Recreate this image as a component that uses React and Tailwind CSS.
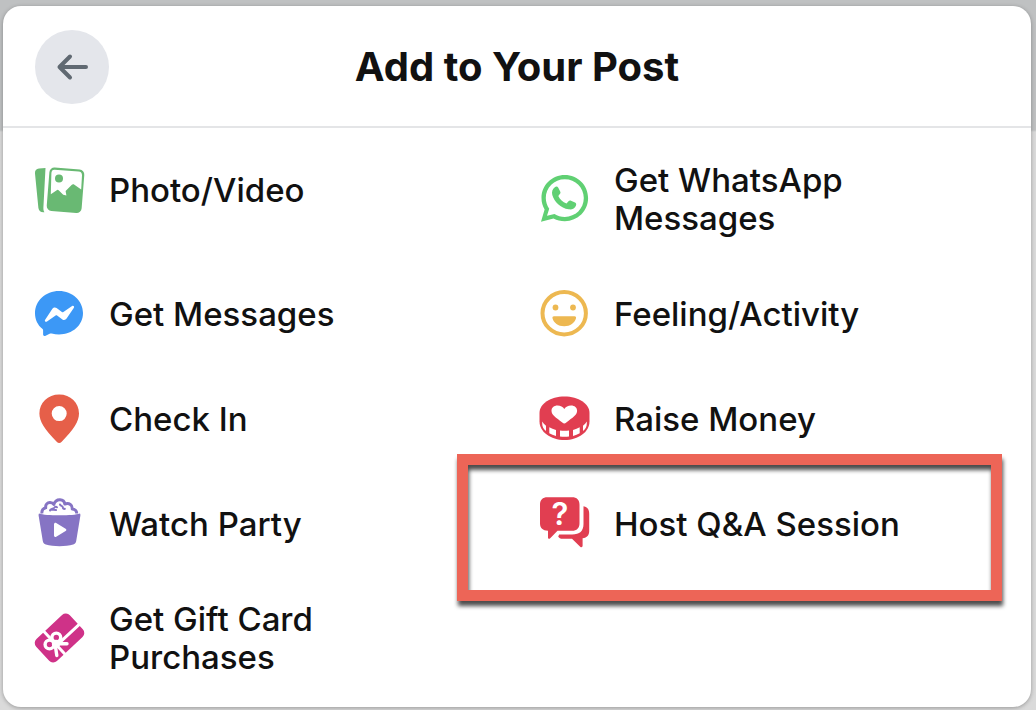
const iconClass = "h-[50px] w-[50px] shrink-0 overflow-visible";

function Svg({ children }) {
  return (
    <svg viewBox="0 0 50 50" className={iconClass} fill="none" aria-hidden="true">
      {children}
    </svg>
  );
}

function PhotoIcon() {
  return (
    <Svg>
      <path d="M4 3.6 10.5 3 8.4 42.5c-.1 2 .2 3.500 1 4.700-3.200.4-5.600-1-6-4.200L0 8.500C-.3 5.800 1.300 3.900 4 3.600Z" fill="#69b973" />
      <rect x="13" y="3.500" width="35" height="43.500" rx="5" transform="rotate(4.500 30.500 25.500)" fill="#69b973" />
      <path d="M19.500 4.700 43.500 6.500c2.300.2 3.600 1.500 3.500 3.800l-.8 14.200-6.800-4.800c-1-.7-2-.6-2.800.2l-6 6 .8 4.500-3.200-.6-4.300-4.400c-.8-.8-1.700-.8-2.500 0l-5.600 3.900L16.400 8c.2-2.200 1.200-3.400 3.100-3.300Z" fill="#fff" />
      <circle cx="24" cy="13.500" r="4" fill="#69b973" />
    </Svg>
  );
}

function MessengerIcon() {
  return (
    <Svg>
      <path d="M24 2C10.500 2 0 11.800 0 24.200c0 6.300 2.700 11.700 7.300 15.600.6.600.8 1 .8 1.800v4c0 1.100 1 1.800 2 1.300l5-2.300c.6-.2 1-.3 1.600-.1 2.300.6 4.800.9 7.300.9 13.500 0 24-9.200 24-21.400S37.500 2 24 2Z" fill="#3c98f6" />
      <path d="m10 31 7.400-11.200c1-1.400 2.800-1.800 4.200-.8l5.300 4c.5.3 1 .3 1.500 0l8.700-5.900c1.200-.8 2.500.4 1.800 1.600l-7.300 10.900c-1 1.500-2.800 1.900-4.200.8l-5.300-3.800c-.5-.4-1-.4-1.500 0L12 32.600c-1.200.8-2.700-.4-2-1.600Z" fill="#fff" />
    </Svg>
  );
}

function PinIcon() {
  return (
    <Svg>
      <path fillRule="evenodd" d="M24.200.5C12.800.5 4.400 8.600 4.400 19.500c0 8 5.300 15.700 17.300 28.300 1.600 1.600 3.400 1.600 5 0C38.700 35.200 44 27.500 44 19.500 44 8.600 35.600.5 24.200.5Zm0 11.600a7.500 7.500 0 1 1 0 15 7.500 7.500 0 0 1 0-15Z" fill="#e65f49" />
    </Svg>
  );
}

function PopcornIcon() {
  return (
    <Svg>
      <path d="M7 14.500c-.6-3 1.200-5.200 3.700-5.700-.5-3.300 1.800-5.400 4.300-5.300 2 .1 3.200 1 3.800 1.900C20 2 22.200.7 25 .8c2.700.1 4.500 2 4.800 4.200 4.600-1.400 7.800 1 7.400 4.900 2.600.2 4.600 2 4.500 4.600" stroke="#8674c4" strokeWidth="3" strokeLinejoin="round" />
      <path d="M15 11.500c.4-2.400 3.400-1.300 4.500-3 .4-.8 1.800-1 2.500-.2M16 10.500l5 .6M25 5.500c.4 1.800 2.800 1 2.800 2.800 0 1.200 1 1.800 2 1.500" stroke="#8674c4" strokeWidth="2" strokeLinecap="round" />
      <path d="M4 14.400c4 1.200 11 1.900 20.500 1.900S41 15.600 45 14.400c.4.600.5 1.200.4 2L41.200 42c-.3 2-1.300 3-3 3.500-7.600 2.200-19.800 2.200-27.400 0-1.700-.5-2.700-1.500-3-3.500L3.600 16.400c-.1-.8 0-1.400.4-2Z" fill="#8674c4" />
      <path d="M19 25.200c0-1.200 1.200-1.900 2.200-1.300l9.400 5.800c1 .6 1 1.800 0 2.400l-9.400 5.700c-1 .6-2.200-.1-2.200-1.300Z" fill="#fff" />
    </Svg>
  );
}

function GiftCardIcon() {
  return (
    <Svg>
      <g transform="rotate(-43 24.500 25)">
        <rect x="1.500" y="10" width="46" height="30" rx="5.500" fill="#cf3288" />
        <path d="M17.500 9v32M17 28.500h32" stroke="#fff" strokeWidth="3" />
      </g>
      <g stroke="#fff" strokeWidth="3.400" strokeLinecap="round">
        <circle cx="21.300" cy="24.500" r="4.400" fill="#cf3288" />
        <circle cx="14.500" cy="31.500" r="4.400" fill="#cf3288" />
        <path d="m20 30.500 12 .3M20 30.500l1.800 12" strokeWidth="3.400" />
      </g>
      <circle cx="21" cy="31" r="4.200" fill="#fff" />
    </Svg>
  );
}

function WhatsAppIcon() {
  return (
    <Svg>
      <path fillRule="evenodd" d="M24.800 1C11.800 1 1.500 11.200 1.500 24c0 4.300 1.100 8.100 3.100 11.500L1 47.700l12.500-3.300c3.400 1.800 7.200 2.800 11.300 2.800 13 0 23.300-10.200 23.300-23.100S37.800 1 24.800 1Zm0 4.300c10.700 0 19 8.200 19 18.800s-8.300 18.800-19 18.800c-3.800 0-7.300-1-10.300-2.900L7 41.800l2.200-7.100c-2.200-3.100-3.400-6.700-3.400-10.600 0-10.600 8.300-18.800 19-18.800Z" fill="#60d073" />
      <path d="M14.800 13.200c1.200-1 2.700-.9 3.500.5l1.900 3.700c.5 1 .3 1.900-.4 2.700l-1.500 1.800c1.700 3.500 4.400 6 8.200 7.600l2-2.200c.7-.8 1.500-1 2.500-.6l4 1.800c1.200.6 1.500 1.700 1 3-1.200 3.100-4.200 4.400-7.400 3.800-8-1.500-14.300-7.300-16.300-14.400-.8-3.200.2-5.900 2.500-7.700Z" fill="#60d073" />
    </Svg>
  );
}

function SmileIcon() {
  return (
    <Svg>
      <ellipse cx="24.200" cy="24.200" rx="21.700" ry="21.200" stroke="#edb851" strokeWidth="4" />
      <circle cx="15.500" cy="18.500" r="2.900" fill="#edb851" />
      <circle cx="33" cy="18.500" r="2.900" fill="#edb851" />
      <path d="M14 27.300h20.500c1.200 0 1.800.8 1.500 2-1.300 4.700-5.700 8-11.800 8s-10.500-3.300-11.700-8c-.3-1.200.3-2 1.500-2Z" fill="#edb851" />
    </Svg>
  );
}

function CoinIcon() {
  return (
    <Svg>
      <path d="M24.500 2.500C10.500 2.500-.5 9.700-.5 19v8.500c0 10.300 11 18.500 25 18.500s25-8.200 25-18.500V19c0-9.300-11-16.500-25-16.500Z" fill="#e13e51" />
      <path d="M20 36.500c3 .3 6 .3 9 0v6c-3 .4-6 .4-9 0ZM9.300 33.300c2 1.100 4.200 2 6.700 2.600v6c-2.500-.6-4.700-1.500-6.700-2.700ZM39.700 33.300c-2 1.100-4.200 2-6.700 2.600v6c2.500-.6 4.700-1.500 6.700-2.700ZM2.200 27.500c.9 1.500 2.200 2.900 3.800 4.200V37c-2.500-2-3.800-4.500-3.800-7.500ZM46.800 27.500c-.9 1.500-2.200 2.900-3.800 4.200V37c2.500-2 3.800-4.500 3.800-7.500Z" fill="#fff" />
      <path d="M24.300 29.500c-.7 0-1.200-.4-2-1-6.500-5-10.800-7.500-10.800-11.700 0-3.200 2.500-5.300 6-5.300 3 0 5.500 1.400 6.800 3.500 1.300-2.100 3.800-3.500 6.800-3.500 3.500 0 6 2.100 6 5.300 0 4.200-4.300 6.700-10.800 11.700-.8.600-1.300 1-2 1Z" fill="#fff" />
    </Svg>
  );
}

function QuestionIcon() {
  return (
    <Svg>
      <path d="M7.500-1.800h24.500c4.900 0 7.500 2.600 7.500 7.500v18.500c0 4.900-2.600 7.500-7.500 7.500H17.500l-7.300 7.500c-1 1-2.200.6-2.200-.8v-6.700C2.800 31.500 0 29 0 24.200V5.700C0 .8 2.600-1.800 7.500-1.800Z" fill="#e13e51" />
      <path d="M43.500 7.200c3.700.4 5.700 3.300 5.700 7.500V32c0 4-2 6.700-6.600 7.300v7.500c0 1.500-1.300 1.900-2.400.9L32 39.800H22.500c-2 0-3.500-.8-4.300-2.300l1-2h13c7.500 0 11.300-3.500 11.300-10.500Z" fill="#e13e51" />
      <text x="20" y="26" textAnchor="middle" fontSize="31" fill="#fff" className="font-semibold">?</text>
    </Svg>
  );
}

const options = [
  { label: "Photo/Video", icon: PhotoIcon },
  { label: "Get WhatsApp Messages", icon: WhatsAppIcon },
  { label: "Get Messages", icon: MessengerIcon },
  { label: "Feeling/Activity", icon: SmileIcon },
  { label: "Check In", icon: PinIcon },
  { label: "Raise Money", icon: CoinIcon },
  { label: "Watch Party", icon: PopcornIcon },
  { label: "Host Q&A Session", icon: QuestionIcon, highlighted: true },
  { label: "Get Gift Card Purchases", icon: GiftCardIcon },
];

export default function App() {
  return (
    <div className="min-h-screen bg-linear-to-b from-[#bfc1c2] from-[130px] to-[#dadada] to-[132px] pt-[6px] pr-[5px] pb-[3px] pl-[3px] font-['Inter','Liberation_Sans',sans-serif] text-[#111]">
      <main className="rounded-[18px] bg-white pb-[7px] shadow-[0_1px_4px_rgba(0,0,0,0.3)]">
        <header className="grid grid-cols-[74px_1fr_74px] items-center border-b-2 border-[#e4e5e7] px-8 pt-6 pb-[22px]">
          <button
            type="button"
            aria-label="Back"
            className="flex h-[74px] w-[74px] items-center justify-center rounded-full bg-[#e4e6eb]"
          >
            <svg viewBox="0 0 32 28" className="h-7 w-8" fill="none" aria-hidden="true">
              <path d="M30 14H3.500M14 3.500 3.500 14 14 24.500" stroke="#606972" strokeWidth="4" strokeLinecap="round" strokeLinejoin="round" />
            </svg>
          </button>
          <h1 className="text-center text-[40px] leading-[60px] font-bold">Add to Your Post</h1>
        </header>

        <ul className="grid grid-cols-2 items-start px-[9px] pt-[9px]">
          {options.map(({ label, icon: Icon, highlighted }) => (
            <li key={label} className="relative">
              <button
                type="button"
                className="flex min-h-[105px] w-full items-center gap-6 px-[23px] py-6 text-left text-[33px] leading-[38px] font-medium"
              >
                <Icon />
                <span className="max-w-xs">{label}</span>
              </button>
              {highlighted && (
                <div className="pointer-events-none absolute -top-[17px] right-5 -bottom-[25px] -left-[60px] border-[11px] border-[#ed6557] drop-shadow-[1px_5px_2px_rgba(0,0,0,0.7)]" />
              )}
            </li>
          ))}
        </ul>
      </main>
    </div>
  );
}
